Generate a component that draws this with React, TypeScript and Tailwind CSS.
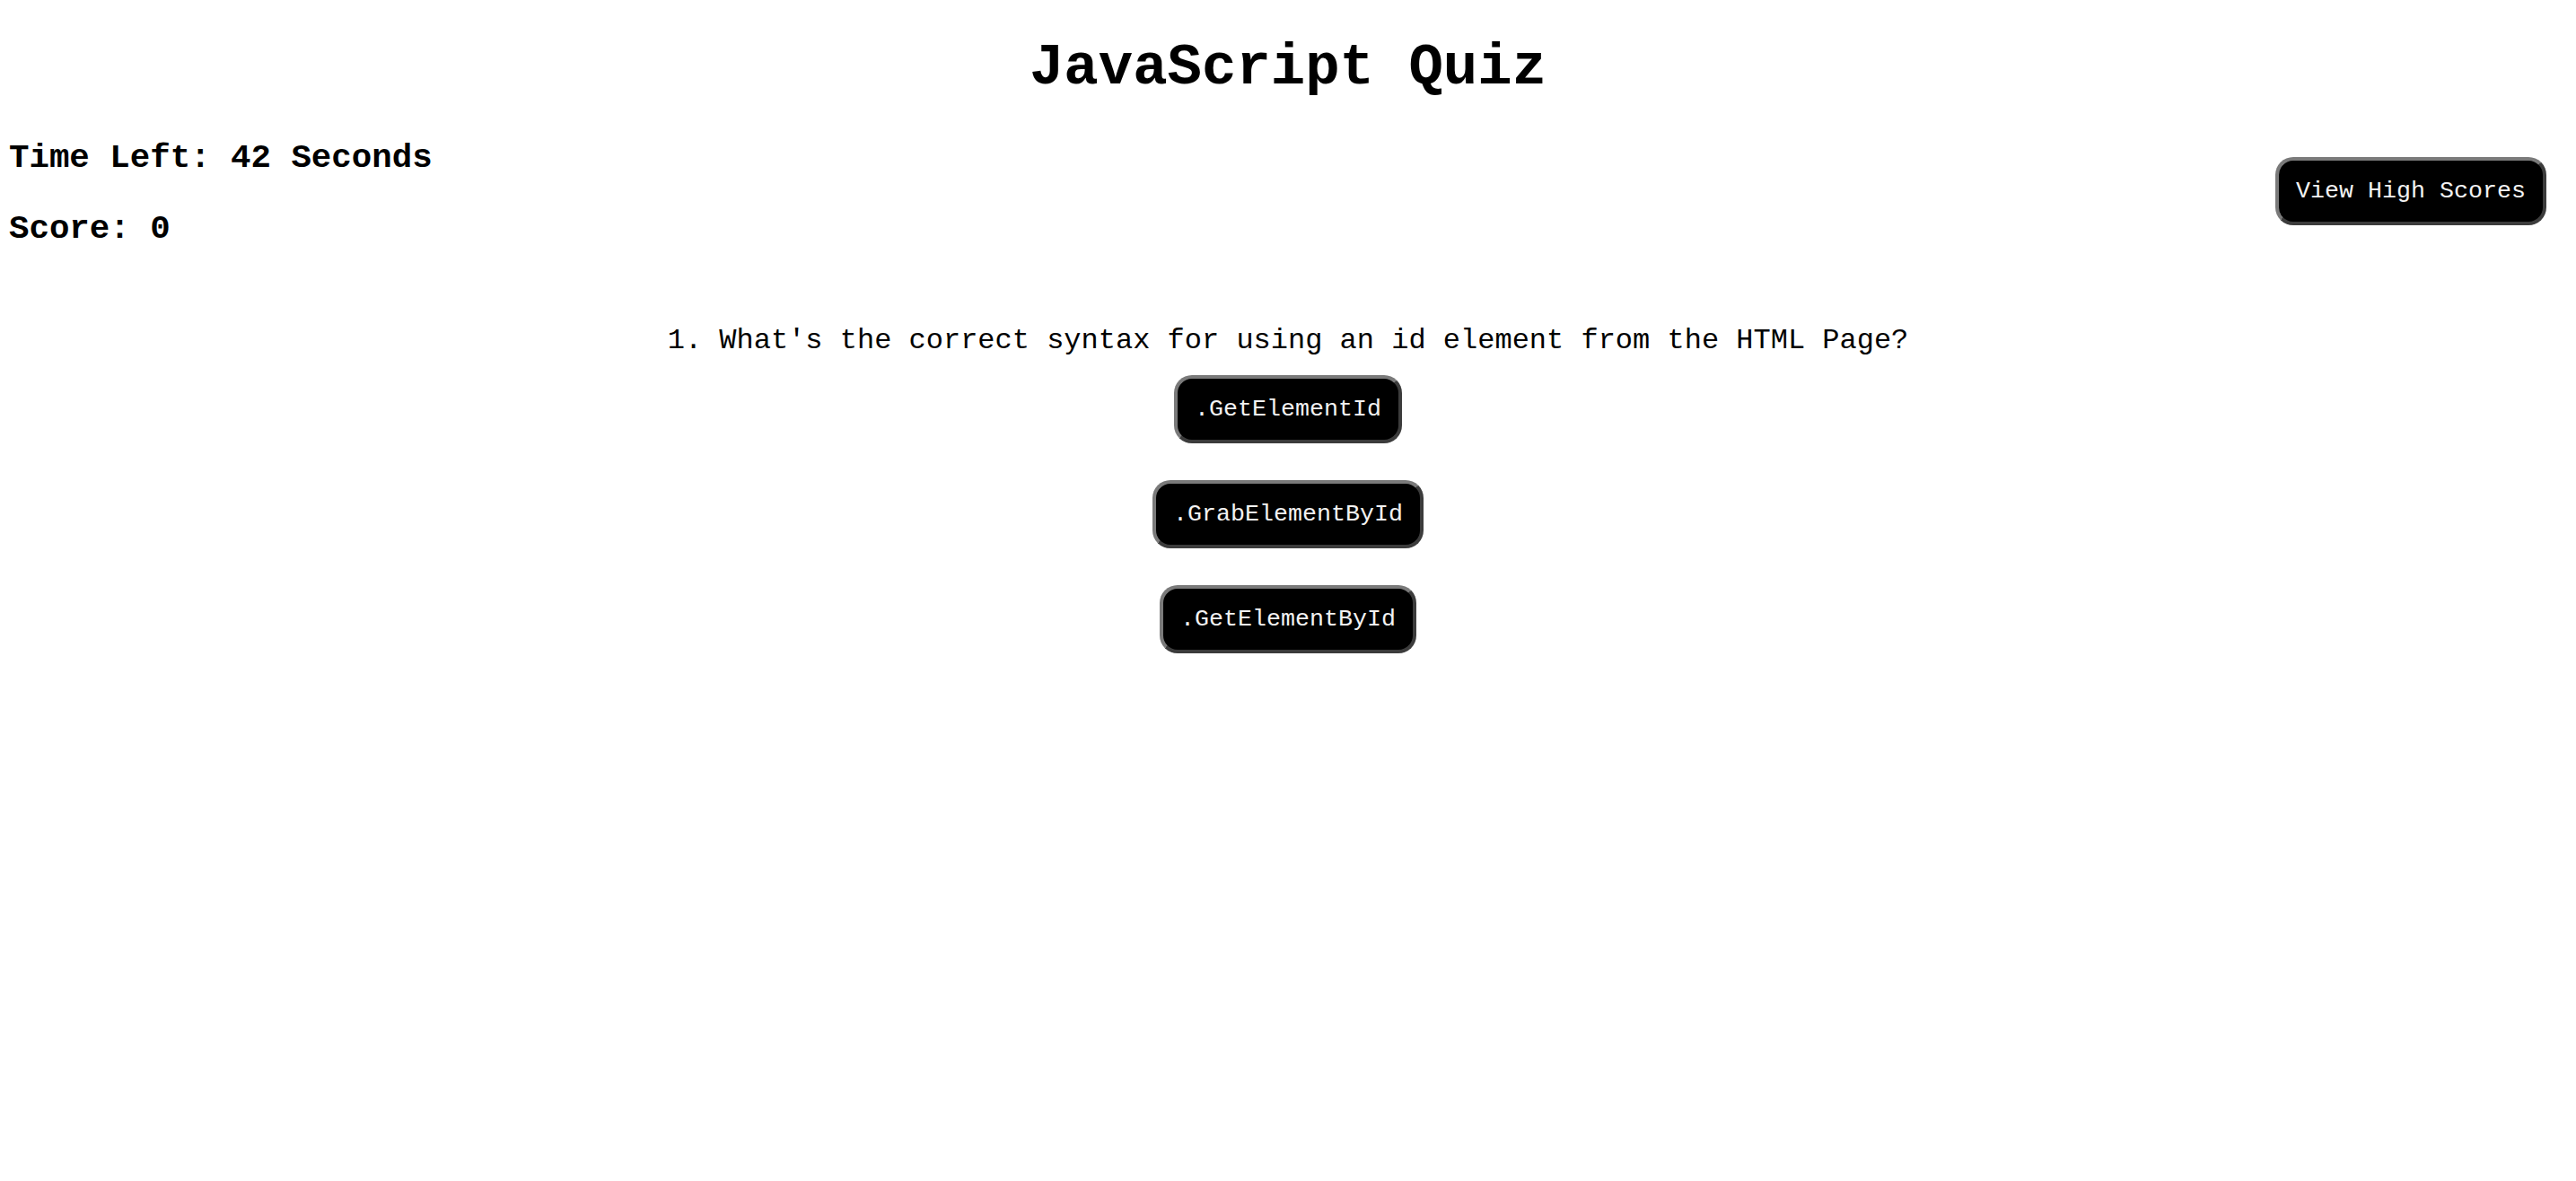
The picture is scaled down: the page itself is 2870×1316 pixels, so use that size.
const answers = ['.GetElementId', '.GrabElementById', '.GetElementById'];

function QuizButton({ label }: { label: string }) {
  return (
    <button className="rounded-[20px] border-[4px] border-solid border-t-[#7a7a7a] border-l-[#7a7a7a] border-b-[#3c3c3c] border-r-[#3c3c3c] bg-black px-[19px] py-[19px] text-[26.67px] leading-[30px] text-[#f2f2f2]">
      {label}
    </button>
  );
}

export default function App() {
  return (
    <div className="min-h-screen bg-white text-black font-['Liberation_Mono','Courier_New',monospace]">
      <h1 className="pt-[40px] text-center text-[64px] font-bold leading-[72px]">JavaScript Quiz</h1>

      <div className="mt-[43px] flex items-start justify-between pl-[10px] pr-[33px]">
        <div>
          <h3 className="text-[37.44px] font-bold leading-[42px]">Time Left: 42 Seconds</h3>
          <h3 className="mt-[37px] text-[37.44px] font-bold leading-[42px]">Score: 0</h3>
        </div>
        <div className="mt-[20px]">
          <QuizButton label="View High Scores" />
        </div>
      </div>

      <p className="mt-[86px] text-center text-[32px] leading-[36px]">
        1. What's the correct syntax for using an id element from the HTML Page?
      </p>

      <div className="mt-[20px] flex flex-col items-center gap-[41px]">
        {answers.map((a) => (
          <QuizButton key={a} label={a} />
        ))}
      </div>
    </div>
  );
}
